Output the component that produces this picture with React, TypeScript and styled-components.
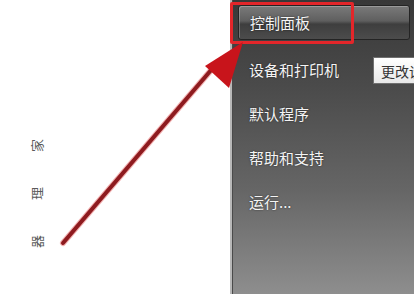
import styled, { createGlobalStyle } from "styled-components";

const Global = createGlobalStyle`
  html, body {
    margin: 0;
    padding: 0;
    background: #ffffff;
    font-family: "Noto Sans CJK SC", "Microsoft YaHei", sans-serif;
  }
`;

const Screen = styled.div`
  position: relative;
  width: 414px;
  height: 294px;
  overflow: hidden;
  display: flex;
  background: #ffffff;
`;

const Side = styled.div`
  width: 230px;
  flex-shrink: 0;
  display: flex;
  flex-direction: column;
  gap: 34px;
  padding: 138px 0 0 30px;
  box-sizing: border-box;
`;

const SideChar = styled.span`
  display: block;
  width: 14px;
  height: 14px;
  font-size: 13px;
  line-height: 14px;
  color: #5a5a5a;
  transform: rotate(-90deg);
`;

const Menu = styled.div`
  flex: 1;
  display: flex;
  flex-direction: column;
  padding-top: 5px;
  box-sizing: border-box;
  border-left: 2px solid #b8b8b8;
  box-shadow: inset 1px 0 0 #4a4a4a;
  background: linear-gradient(180deg, #383838 0%, #4b4b4b 30%, #666666 65%, #8e8e8e 100%);
`;

const Item = styled.div<{ $active?: boolean }>`
  display: flex;
  align-items: center;
  height: ${(p) => (p.$active ? "35px" : "44px")};
  margin: ${(p) => (p.$active ? "0 4px 7px 6px" : "0 4px 0 6px")};
  padding-left: 11px;
  box-sizing: border-box;
  font-size: 15px;
  color: #f4f4f4;
  text-shadow: 0 0 2px rgba(0, 0, 0, 0.6);
  border-radius: 3px;
  ${(p) =>
    p.$active &&
    `
    background: linear-gradient(180deg, #7a7a7a 0%, #5f5f5f 45%, #3e3e3e 55%, #4c4c4c 100%);
    border: 1px solid #242424;
    box-shadow: inset 1px 1px 0 rgba(255,255,255,0.25);
  `}
`;

const Highlight = styled.div`
  position: absolute;
  left: 230px;
  top: 2px;
  width: 118px;
  height: 36px;
  border: 3px solid #e3262a;
  border-radius: 2px;
`;

const Tip = styled.div`
  position: absolute;
  left: 373px;
  top: 57px;
  height: 25px;
  padding: 0 6px 0 7px;
  display: flex;
  align-items: center;
  font-size: 14px;
  color: #333333;
  background: linear-gradient(180deg, #ffffff, #e8e8e8);
  border: 1px solid #707070;
  white-space: nowrap;
`;

const Arrow = styled.svg`
  position: absolute;
  left: 0;
  top: 0;
  pointer-events: none;
`;

const items = ["设备和打印机", "默认程序", "帮助和支持", "运行..."];

export default function App() {
  return (
    <>
      <Global />
      <Screen>
        <Side>
          <SideChar>家</SideChar>
          <SideChar>理</SideChar>
          <SideChar>器</SideChar>
        </Side>
        <Menu>
          <Item $active>控制面板</Item>
          {items.map((t) => (
            <Item key={t}>{t}</Item>
          ))}
        </Menu>
        <Tip>更改设置</Tip>
        <Highlight />
        <Arrow width="414" height="294" viewBox="0 0 414 294">
          <line x1="63" y1="243" x2="218" y2="62" stroke="#f2b0b0" strokeWidth="6" strokeLinecap="round" />
          <line x1="63" y1="243" x2="218" y2="62" stroke="#8e1b1f" strokeWidth="4" strokeLinecap="round" />
          <polygon points="243,42 205,66 229,88" fill="#c8141b" />
        </Arrow>
      </Screen>
    </>
  );
}
